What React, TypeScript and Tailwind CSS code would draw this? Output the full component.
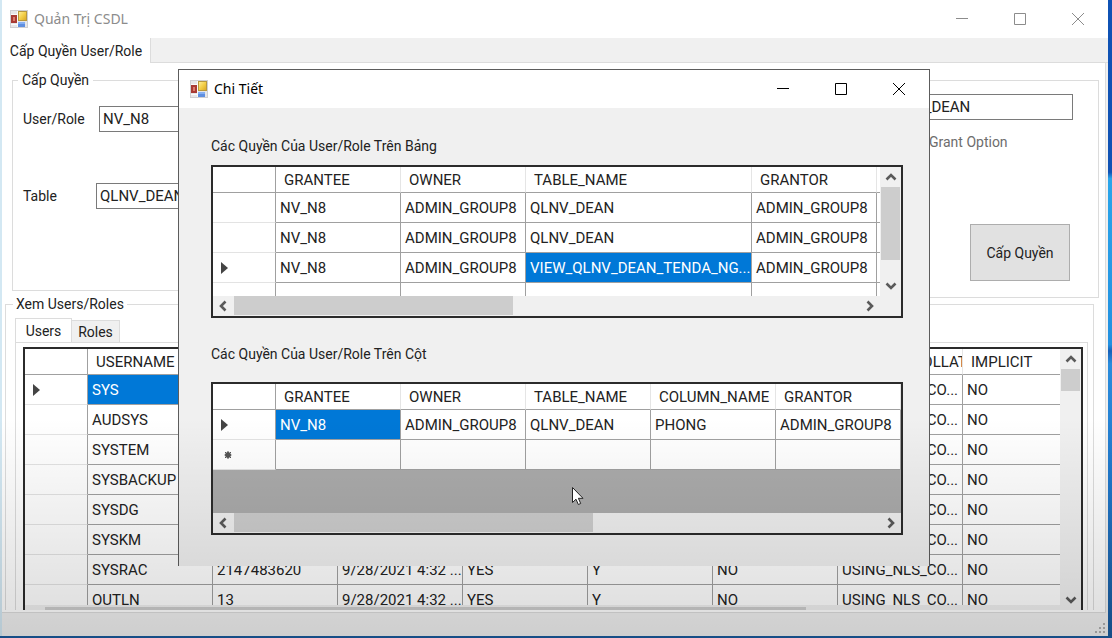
import React, { useId } from "react";
import clsx from "clsx";

type Column = { name: string; width: string };
type GridProps = {
  label: string;
  columns: Column[];
  rows: string[][];
  selected: [number, number];
  newRow?: number;
};

function FormIcon() {
  return (
    <svg width="18" height="18" viewBox="0 0 18 18" aria-hidden="true">
      <defs>
        <linearGradient id="gold" x1="0" y1="0" x2="1" y2="1">
          <stop offset="0" stopColor="#fff0a0" />
          <stop offset="0.5" stopColor="#f3cf48" />
          <stop offset="1" stopColor="#d8a422" />
        </linearGradient>
      </defs>
      <rect x="0.5" y="0.5" width="17" height="17" fill="#e6e6e8" stroke="#cfcfd2" />
      <path d="M7.500 1v16M1 4.500h6M1 14.500h6" stroke="#fafafa" />
      <rect x="1" y="5" width="6" height="8" fill="#a83a34" />
      <rect x="3" y="7" width="2" height="4" fill="#dc7a6a" />
      <rect x="8.500" y="1.500" width="8" height="9" fill="url(#gold)" stroke="#b8983c" />
      <rect x="8" y="12" width="7" height="5" fill="#5f8fe0" />
      <rect x="8" y="12" width="7" height="2" fill="#86b0f2" />
    </svg>
  );
}

function WindowButtons() {
  const shapes = [
    { label: "Minimize", d: "M0 5.500h12" },
    { label: "Maximize", d: "M0.500 0.500h11v11h-11z" },
    { label: "Close", d: "M0 0l12 12M12 0L0 12" },
  ];
  return (
    <div className="flex pr-px">
      {shapes.map((s) => (
        <button key={s.label} aria-label={s.label} className="flex h-[38px] w-[58px] items-center justify-center">
          <svg width="12" height="12" viewBox="0 0 12 12" fill="none" stroke="currentColor">
            <path d={s.d} />
          </svg>
        </button>
      ))}
    </div>
  );
}

const arrows = {
  left: "M8.500 1.500L4 6l4.500 4.500",
  right: "M3.500 1.500L8 6l-4.500 4.500",
  up: "M1.500 8.500L6 4l4.500 4.500",
  down: "M1.500 3.500L6 8l4.500-4.500",
};

function Arrow({ dir }: { dir: keyof typeof arrows }) {
  return (
    <button aria-label={`Scroll ${dir}`} className="flex size-5 shrink-0 items-center justify-center">
      <svg width="12" height="12" viewBox="0 0 12 12" fill="none" stroke="#5a5a5a" strokeWidth="2.600">
        <path d={arrows[dir]} />
      </svg>
    </button>
  );
}

function HScroll({ thumb }: { thumb: string }) {
  return (
    <div className="flex h-5 w-full shrink-0 bg-[#f0f0f0]">
      <Arrow dir="left" />
      <div className="flex grow pl-px">
        <div className={clsx("h-[19px] bg-[#cdcdcd]", thumb)} />
      </div>
      <Arrow dir="right" />
    </div>
  );
}

function VScroll({ thumb }: { thumb: string }) {
  return (
    <div className="flex w-[21px] shrink-0 flex-col items-center bg-[#f0f0f0]">
      <Arrow dir="up" />
      <div className="w-full grow px-px">
        <div className={clsx("bg-[#cdcdcd]", thumb)} />
      </div>
      <Arrow dir="down" />
    </div>
  );
}

function DataGrid({ label, columns, rows, selected, newRow }: GridProps) {
  return (
    <table aria-label={label} className="w-px table-fixed border-separate border-spacing-0 bg-white text-left text-[15px] leading-5 text-[#222]">
      <colgroup>
        <col className="w-[63px]" />
        {columns.map((c, i) => (
          <col key={i} className={c.width} />
        ))}
      </colgroup>
      <thead>
        <tr className="h-[26px]">
          <td className="border-r border-b border-[#a0a0a0]" />
          {columns.map((c, i) => (
            <th key={i} scope="col" className="overflow-hidden border-r border-b border-r-[#e5e5e5] border-b-[#a0a0a0] py-0 pr-0 pl-2 font-normal whitespace-nowrap">
              {c.name}
            </th>
          ))}
        </tr>
      </thead>
      <tbody>
        {rows.map((row, r) => (
          <tr key={r} className="h-[30px]">
            <td className="border-r border-b border-r-[#a0a0a0] border-b-[#e3e3e3] py-0 pr-0 pl-2">
              {r === selected[0] && (
                <svg width="7" height="12" viewBox="0 0 7 12" fill="#444" aria-hidden="true">
                  <path d="M0 0l7 6-7 6z" />
                </svg>
              )}
              {r === newRow && (
                <svg className="ml-[3px]" width="8" height="8" viewBox="0 0 8 8" fill="#555" stroke="#555" aria-hidden="true">
                  <circle cx="4" cy="4" r="2.500" />
                  <path d="M4 0v8M0.500 4h7M1 1l6 6M7 1L1 7" />
                </svg>
              )}
            </td>
            {row.map((cell, c) => (
              <td
                key={c}
                className={clsx(
                  "overflow-hidden border-r border-b border-[#a0a0a0] py-0 pr-0 pl-1 whitespace-nowrap",
                  r === selected[0] && c === selected[1] && "bg-[#0078d7] text-white",
                )}
              >
                {cell}
              </td>
            ))}
          </tr>
        ))}
      </tbody>
    </table>
  );
}

const W = "w-[125px]";
const userColumns: Column[] = ["USERNAME", "", "", "", "", "", "DEFAULT_COLLATION", "IMPLICIT"].map((name) => ({ name, width: W }));

const collation = "USING_NLS_CO...";
const created = "9/28/2021 4:32 ...";
const userRows = [
  ...["SYS", "AUDSYS", "SYSTEM", "SYSBACKUP", "SYSDG", "SYSKM"].map((name) => [name, "", "", "", "", "", collation, "NO"]),
  ["SYSRAC", "2147483620", created, "YES", "Y", "NO", collation, "NO"],
  ["OUTLN", "13", created, "YES", "Y", "NO", collation, "NO"],
];

const tableColumns: Column[] = [
  { name: "GRANTEE", width: W },
  { name: "OWNER", width: W },
  { name: "TABLE_NAME", width: "w-[226px]" },
  { name: "GRANTOR", width: W },
  { name: "", width: W },
];
const tableRows = [
  ["NV_N8", "ADMIN_GROUP8", "QLNV_DEAN", "ADMIN_GROUP8", ""],
  ["NV_N8", "ADMIN_GROUP8", "QLNV_DEAN", "ADMIN_GROUP8", ""],
  ["NV_N8", "ADMIN_GROUP8", "VIEW_QLNV_DEAN_TENDA_NG...", "ADMIN_GROUP8", ""],
  ["", "", "", "", ""],
];
const columnColumns: Column[] = ["GRANTEE", "OWNER", "TABLE_NAME", "COLUMN_NAME", "GRANTOR"].map((name) => ({ name, width: W }));
const columnRows = [
  ["NV_N8", "ADMIN_GROUP8", "QLNV_DEAN", "PHONG", "ADMIN_GROUP8"],
  ["", "", "", "", ""],
];

function Field({ label, value, gap }: { label: string; value: string; gap: string }) {
  const id = useId();
  return (
    <div className="flex items-center">
      <label htmlFor={id} className={gap}>
        {label}
      </label>
      <input id={id} defaultValue={value} className="h-[26px] w-[260px] border border-[#7a7a7a] bg-white px-[3px] text-[15px]" />
    </div>
  );
}

function GrantForm() {
  return (
    <div className="mr-[6px] ml-[10px] flex h-[226px] shrink-0 items-start">
      <fieldset className="h-[219px] grow border border-[#dcdcdc] pl-[10px]">
        <legend className="-ml-[5px] px-1 leading-4">Cấp Quyền</legend>
        <div className="flex flex-col gap-[51px] pt-[18px]">
          <Field label="User/Role" value="NV_N8" gap="w-[76px]" />
          <Field label="Table" value="QLNV_DEAN" gap="w-[73px]" />
        </div>
      </fieldset>
      <div className="h-full grow pt-2">
        <div className="flex h-full flex-col items-end border border-[#dcdcdc] pt-[13px] pr-[25px]">
          <input aria-label="Table name" defaultValue="QLNV_DEAN" className="h-[26px] w-[191px] border border-[#7a7a7a] bg-white px-[3px] text-[15px]" />
          <label className="mt-3 flex w-[161px] items-center gap-1 leading-5 text-[#6d6d6d]">
            <input type="checkbox" disabled className="size-[13px] shrink-0" />
            <span className="whitespace-nowrap">Grant Option</span>
          </label>
          <button className="mt-[72px] mr-[3px] h-[57px] w-[100px] border border-[#adadad] bg-[#e1e1e1]">Cấp Quyền</button>
        </div>
      </div>
    </div>
  );
}

function UsersPanel() {
  return (
    <fieldset className="mr-[11px] ml-[3px] flex min-h-0 min-w-0 grow flex-col overflow-hidden border border-b-0 border-[#dcdcdc] pr-[5px] pl-[9px]">
      <legend className="-ml-[2px] px-[3px] leading-3">Xem Users/Roles</legend>
      <div role="tablist" className="mt-2 flex shrink-0 items-end">
        <button role="tab" aria-selected="true" className="h-6 w-[57px] border border-b-0 border-[#dcdcdc] bg-white">
          Users
        </button>
        <button role="tab" aria-selected="false" className="h-[22px] w-12 border border-b-0 border-l-0 border-[#dcdcdc] bg-[#f0f0f0]">
          Roles
        </button>
      </div>
      <div className="flex min-h-0 grow flex-col border-x border-t border-[#dcdcdc] pt-1 pr-1 pl-[7px]">
        <div className="flex min-h-0 grow border-2 border-b-0 border-[#2b2b2b]">
          <div className="flex min-w-0 grow flex-col">
            <div className="min-h-0 grow overflow-hidden">
              <DataGrid label="Users" columns={userColumns} rows={userRows} selected={[0, 0]} />
            </div>
            <div className="flex h-[5px] shrink-0 bg-[#f0f0f0] pt-0.5 pl-5">
              <div className="h-[3px] w-3/4 bg-[#cdcdcd]" />
            </div>
          </div>
          <VScroll thumb="h-[22px]" />
        </div>
      </div>
    </fieldset>
  );
}

function DetailDialog() {
  return (
    <section
      role="dialog"
      aria-label="Chi Tiết"
      className="absolute top-[69px] left-[178px] flex w-[752px] flex-col border border-b-0 border-[#5c5c5c] bg-[#f0f0f0] pb-[31px]"
    >
      <header className="flex h-[38px] items-center gap-[6px] bg-white pl-[11px] font-['Noto_Sans',sans-serif] text-sm text-black">
        <FormIcon />
        <h2 className="grow">Chi Tiết</h2>
        <WindowButtons />
      </header>
      <div className="flex flex-col pr-[26px] pl-8">
        <h3 className="mt-7 leading-5">Các Quyền Của User/Role Trên Bảng</h3>
        <div className="mt-[9px] flex h-[153px] flex-col border-2 border-[#2b2b2b]">
          <div className="flex min-h-0 grow">
            <div className="flex min-w-0 grow flex-col">
              <div className="min-h-0 grow overflow-hidden">
                <DataGrid label="Các Quyền Của User/Role Trên Bảng" columns={tableColumns} rows={tableRows} selected={[2, 2]} />
              </div>
              <HScroll thumb="w-[279px]" />
            </div>
            <div className="flex flex-col bg-[#f0f0f0] pb-5">
              <div className="flex grow">
                <VScroll thumb="h-[73px]" />
              </div>
            </div>
          </div>
        </div>
        <h3 className="mt-[26px] leading-5">Các Quyền Của User/Role Trên Cột</h3>
        <div className="mt-[18px] flex h-[153px] flex-col border-2 border-[#2b2b2b]">
          <div className="min-h-0 grow overflow-hidden bg-[#ababab]">
            <DataGrid label="Các Quyền Của User/Role Trên Cột" columns={columnColumns} rows={columnRows} selected={[0, 0]} newRow={1} />
          </div>
          <HScroll thumb="w-[359px]" />
        </div>
      </div>
    </section>
  );
}

export default function App() {
  return (
    <div className="relative flex h-screen overflow-hidden bg-[linear-gradient(#0f52b4_27%,#2aa5ea_28%,#2290e0_54%,#1660b8_55%,#2a8cdc_57%,#1f78cc_75%,#1a5a9c)] pr-1 pb-0.5 font-[Roboto,'Liberation_Sans',sans-serif] text-sm text-[#222]">
      <main className="flex min-w-0 grow flex-col border-l-2 border-[#d3e8f3] bg-[#f0f0f0]">
        <header className="flex h-[38px] shrink-0 items-center gap-[6px] bg-white pl-2 font-['Noto_Sans',sans-serif] text-[#8c8c8c]">
          <FormIcon />
          <h1 className="grow">Quản Trị CSDL</h1>
          <WindowButtons />
        </header>
        <div role="tablist" className="flex h-[25px] shrink-0">
          <button role="tab" aria-selected="true" className="w-[149px] border-r border-[#dcdcdc] bg-white">
            Cấp Quyền User/Role
          </button>
          <div className="grow border-b border-[#dcdcdc]" />
        </div>
        <div className="mr-0.5 flex min-h-0 grow flex-col border-r border-b border-[#dcdcdc] bg-white pt-[9px] pb-0.5">
          <GrantForm />
          <UsersPanel />
        </div>
        <footer className="flex h-[23px] shrink-0 items-end justify-end pr-0.5 pb-0.5">
          <svg width="11" height="11" viewBox="0 0 11 11" fill="#b0b0b0" aria-hidden="true">
            <path d="M8 0h2v2H8zM8 4h2v2H8zM4 4h2v2H4zM8 8h2v2H8zM4 8h2v2H4zM0 8h2v2H0z" />
          </svg>
        </footer>
      </main>
      <DetailDialog />
      <div className="pointer-events-none absolute inset-x-0 bottom-0 h-[220px] bg-linear-to-b from-transparent to-black/14" />
      <svg className="pointer-events-none absolute top-[486px] left-[571px]" width="13" height="20" viewBox="0 0 13 20" aria-hidden="true">
        <path d="M1.500 1.500v15l3.500-3.300 2.300 5.300 2.400-1-2.300-5.200h4.600z" fill="#fff" stroke="#222" />
      </svg>
    </div>
  );
}
